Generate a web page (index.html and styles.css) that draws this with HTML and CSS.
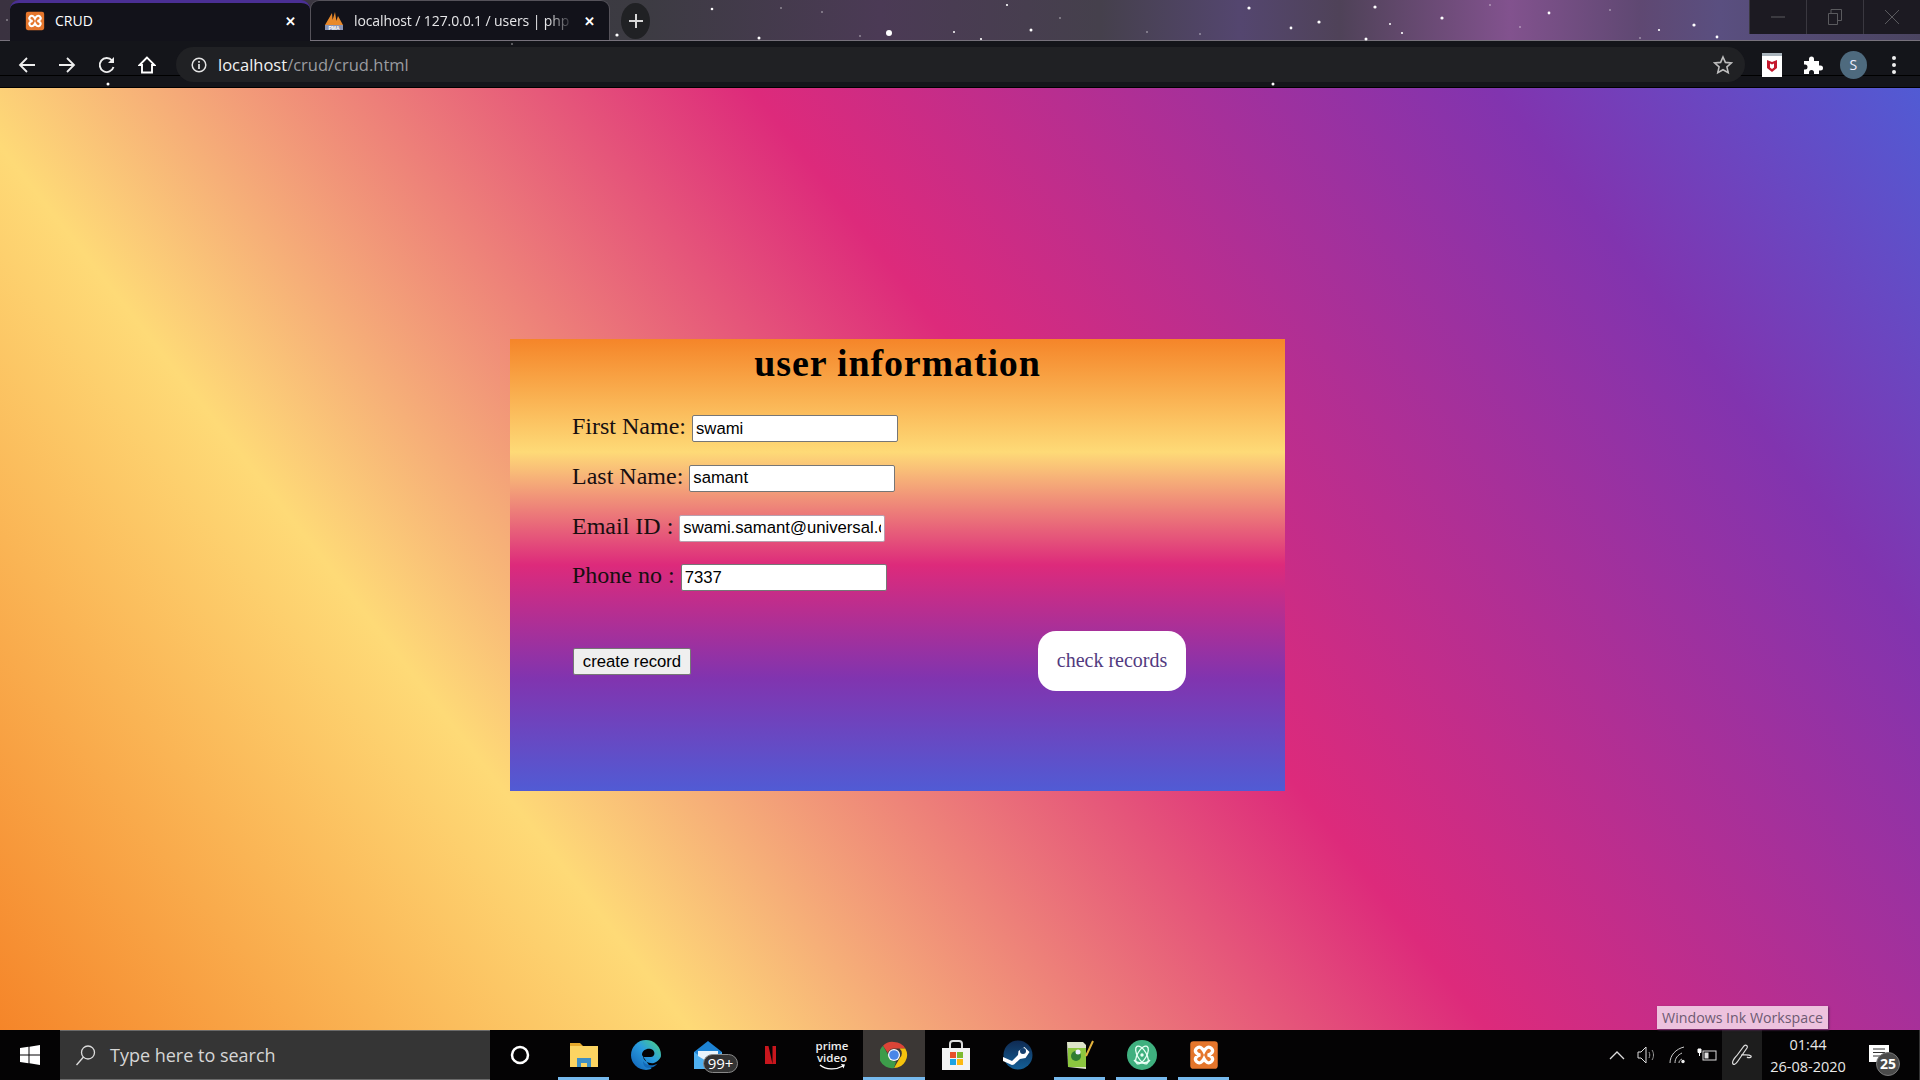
FILE: index.html
```html
<!DOCTYPE html>
<html>
<head>
    <title>CRUD</title>
    <link rel="stylesheet" href="styles.css">
</head>
<body>
    <svg width="0" height="0" class="defs">
        <symbol id="xampp" viewBox="0 0 24 24">
            <rect x="1" y="1" width="22" height="22" rx="2.500" fill="#e5762c"/>
            <path transform="translate(12 12) scale(1.180) translate(-12 -12)" d="M7 7.500c2-2 4 0 5 2 1-2 3-4 5-2s0 4-2.500 4.500c2.500.5 4.500 2.500 2.500 4.500s-4 0-5-2c-1 2-3 4-5 2s0-4 2.500-4.500C7 11.500 5 9.500 7 7.500z" fill="none" stroke="#fff" stroke-width="2.200"/>
        </symbol>
    </svg>

    <header class="browser">
        <svg class="stars" width="1920" height="88">
            <g fill="#fff">
                <circle cx="889" cy="33" r="3"/>
                <circle cx="712" cy="9" r="1.300"/><circle cx="1249" cy="8" r="1.600"/><circle cx="1375" cy="7" r="1.600"/>
                <circle cx="1442" cy="18" r="1.600"/><circle cx="1319" cy="22" r="1.600"/><circle cx="1291" cy="28" r="1.400"/>
                <circle cx="1549" cy="13" r="1.400"/><circle cx="759" cy="38" r="1.500"/><circle cx="617" cy="35" r="1.600"/>
                <circle cx="1031" cy="30" r="1.500"/><circle cx="1366" cy="39" r="1.500"/><circle cx="1402" cy="33" r="1.100"/>
                <circle cx="1390" cy="24" r="1"/><circle cx="981" cy="39" r="1.100"/><circle cx="1007" cy="5" r="1.100"/>
                <circle cx="954" cy="32" r="1"/><circle cx="1694" cy="25" r="1.600"/><circle cx="1659" cy="30" r="1.100"/>
                <circle cx="1717" cy="37" r="1.400"/><circle cx="108" cy="84" r="1.500"/><circle cx="1273" cy="84" r="1.500"/>
            </g>
            <g fill="#fff" opacity=".4">
                <circle cx="781" cy="8" r="1"/><circle cx="822" cy="12" r="1"/><circle cx="860" cy="36" r="1"/>
                <circle cx="1060" cy="18" r="1"/><circle cx="1147" cy="32" r="1"/><circle cx="1200" cy="34" r="1"/>
                <circle cx="1490" cy="5" r="1"/><circle cx="1520" cy="27" r="1"/><circle cx="1610" cy="10" r="1"/>
                <circle cx="1640" cy="38" r="1"/><circle cx="7" cy="20" r="1"/><circle cx="512" cy="44" r="1"/>
            </g>
        </svg>
        <div class="tabstrip">
            <div class="tab active">
                <svg class="favicon" width="20" height="20"><use href="#xampp"/></svg>
                <span class="tab-title">CRUD</span>
                <span class="tab-close">✕</span>
            </div>
            <div class="tab second">
                <svg class="favicon" width="20" height="20" viewBox="0 0 20 20">
                    <path d="M1 14L8 2l1 12zM7 14l4-13 2 13zM11 14L14 5l5 9z" fill="#e8892b"/>
                    <rect x="1" y="14" width="18" height="5" fill="#8a94b4"/>
                    <text x="10" y="18.500" class="pma">PMA</text>
                </svg>
                <span class="tab-title fade">localhost / 127.0.0.1 / users | php</span>
                <span class="tab-close">✕</span>
            </div>
            <div class="newtab">
                <svg width="16" height="16" viewBox="0 0 16 16"><path d="M8 1v14M1 8h14" stroke="#d8d8d8" stroke-width="2"/></svg>
            </div>
            <div class="winbtns">
                <div class="winbtn"><svg width="14" height="14" viewBox="0 0 14 14"><path d="M0 7h14" stroke="#5a5a5e"/></svg></div>
                <div class="winbtn"><svg width="14" height="16" viewBox="0 0 14 16"><path d="M.5 4.500h9v11h-9zM3 4.500v-4h10.500v11h-4" fill="none" stroke="#5a5a5e"/></svg></div>
                <div class="winbtn"><svg width="14" height="16" viewBox="0 0 14 16"><path d="M0 1l14 14M14 1L0 15" stroke="#5a5a5e"/></svg></div>
            </div>
        </div>
        <div class="toolbar">
            <button class="navbtn"><svg width="18" height="18" viewBox="0 0 18 18"><path d="M17 9H2M9 2L2 9l7 7" fill="none" stroke="#eee" stroke-width="1.800"/></svg></button>
            <button class="navbtn"><svg width="18" height="18" viewBox="0 0 18 18"><path d="M1 9h15M9 2l7 7-7 7" fill="none" stroke="#eee" stroke-width="1.800"/></svg></button>
            <button class="navbtn"><svg width="18" height="18" viewBox="0 0 18 18"><path d="M15.500 11a7 7 0 1 1-1.400-6.500" fill="none" stroke="#eee" stroke-width="1.900"/><path d="M16 1v6h-6z" fill="#eee"/></svg></button>
            <button class="navbtn"><svg width="18" height="18" viewBox="0 0 18 18"><path d="M9 1.500L1.500 9H4v7.500h10V9h2.500z" fill="none" stroke="#fff" stroke-width="1.900"/></svg></button>
            <div class="omnibox">
                <svg width="16" height="16" viewBox="0 0 16 16"><circle cx="8" cy="8" r="6.800" fill="none" stroke="#e4e4e4" stroke-width="1.500"/><path d="M8 7v5M8 4v1.700" stroke="#e4e4e4" stroke-width="1.700"/></svg>
                <span class="url"><span class="host">localhost</span>/crud/crud.html</span>
                <svg class="star" width="20" height="20" viewBox="0 0 20 20"><path d="M10 2l2.400 5.400 5.900.6-4.400 3.900 1.300 5.800L10 14.700l-5.200 3 1.300-5.800L1.700 8l5.900-.6z" fill="none" stroke="#bdbdbd" stroke-width="1.600"/></svg>
            </div>
            <div class="ext mcafee">
                <svg width="20" height="24" viewBox="0 0 20 24"><rect width="20" height="24" fill="#fff"/><rect width="20" height="3" fill="#a9b4bc"/><path d="M5 7l5 2 5-2v8l-5 4-5-4z" fill="#c4172c"/><path d="M8 10.500l2 1 2-1v4l-2 1.500-2-1.500z" fill="#fff"/></svg>
            </div>
            <div class="ext">
                <svg width="20" height="20" viewBox="0 0 20 20"><path d="M1 6h5V4a2.500 2.500 0 0 1 5 0v2h5v4.500h1.500a2.500 2.500 0 0 1 0 5H16V19H11v-1.500a2.500 2.500 0 0 0-5 0V19H1v-4.500h1a2.500 2.500 0 0 0 0-5H1z" fill="#fff"/></svg>
            </div>
            <div class="ext"><span class="avatar">S</span></div>
            <div class="ext">
                <svg width="6" height="20" viewBox="0 0 6 20"><circle cx="3" cy="3" r="2" fill="#eee"/><circle cx="3" cy="10" r="2" fill="#eee"/><circle cx="3" cy="17" r="2" fill="#eee"/></svg>
            </div>
        </div>
    </header>

    <main class="page">
        <form class="card">
            <h1>user information</h1>
            <div class="field"><label>First Name:</label><input type="text" value="swami"></div>
            <div class="field"><label>Last Name:</label><input type="text" value="samant"></div>
            <div class="field email"><label>Email ID :</label><input type="text" value="swami.samant@universal.com"></div>
            <div class="field"><label>Phone no :</label><input type="text" value="7337"></div>
            <div class="actions">
                <button type="button" class="create">create record</button>
                <a class="check">check records</a>
            </div>
        </form>
        <div class="ink-tip">Windows Ink Workspace</div>
    </main>

    <footer class="taskbar">
        <div class="startbtn">
            <svg width="20" height="20" viewBox="0 0 20 20"><path d="M0 3l8.500-1.200v7.700H0zM9.500 1.700L20 0v9.500H9.500zM0 10.500h8.500v7.700L0 17zM9.500 10.500H20V20L9.500 18.300z" fill="#fff"/></svg>
        </div>
        <div class="search">
            <svg width="22" height="22" viewBox="0 0 22 22"><circle cx="13" cy="8.500" r="6.500" fill="none" stroke="#ddd" stroke-width="1.300"/><path d="M8.500 13L1.500 21" stroke="#ddd" stroke-width="1.300"/></svg>
            <span>Type here to search</span>
        </div>
        <div class="slot cortana">
            <svg width="22" height="22" viewBox="0 0 22 22"><circle cx="11" cy="11" r="8" fill="none" stroke="#fff" stroke-width="2.500"/></svg>
        </div>
        <div class="slot open">
            <svg width="30" height="28" viewBox="0 0 30 28"><path d="M1 2h10l3 3H1z" fill="#e5a92c"/><rect x="1" y="5" width="28" height="21" fill="#fcd462"/><path d="M8 26v-9h14v9h-4v-4h-6v4z" fill="#3f8fc4"/></svg>
        </div>
        <div class="slot">
            <svg width="32" height="32" viewBox="0 0 32 32">
                <defs><linearGradient id="edge" x1="1" y1="0" x2="0" y2="1"><stop offset="0" stop-color="#4fd67a"/><stop offset=".45" stop-color="#2a9de0"/><stop offset="1" stop-color="#0f5fb5"/></linearGradient></defs>
                <circle cx="16" cy="16" r="15" fill="url(#edge)"/>
                <path d="M12 16c0-5 5-7 9-6 3 1 4 4 3 6-1 2-3 2-4 2h-7c1 4 6 7 11 6 3-1 5-3 7-6v14h-8c-1 0-1 0 0 0z" fill="#040304"/>
                <path d="M13 22c2 4 7 5 11 4 2-.5 3-1 4-2-2 3-6 5-10 5-3 0-5-3-5-7z" fill="#1269b8"/>
            </svg>
        </div>
        <div class="slot mail">
            <svg width="30" height="28" viewBox="0 0 30 28"><path d="M15 0L1 11v17h28V11z" fill="#1d83d4"/><path d="M1 11l14 10 14-10v17H1z" fill="#4fb0f0"/><path d="M5 10h20v5l-10 6-10-6z" fill="#e8f4fc"/></svg>
            <span class="badge">99+</span>
        </div>
        <div class="slot">
            <svg width="11" height="18" viewBox="0 0 11 18"><path d="M0 0h3.500L7.500 18H3.500zM7.500 0H11v18H7.500zM0 0h3.500v18H0z" fill="#c9161d"/></svg>
        </div>
        <div class="slot prime">
            <span class="prime-word">prime</span>
            <span class="prime-word">video</span>
            <svg width="26" height="7" viewBox="0 0 26 7"><path d="M1 1c6 5 16 5 23 1" fill="none" stroke="#fff" stroke-width="1.300"/><path d="M22 0l4 .5-1.500 4z" fill="#fff"/></svg>
        </div>
        <div class="slot open active">
            <svg width="28" height="28" viewBox="0 0 28 28">
                <path d="M14 1a13 13 0 0 1 11.300 6.500H14a6.500 6.500 0 0 0-6.200 4.500L3 4.700A13 13 0 0 1 14 1z" fill="#db4437"/>
                <path d="M25.300 7.500A13 13 0 0 1 14 27l5.600-9.700A6.500 6.500 0 0 0 19.600 7.500z" fill="#f4c20d"/>
                <path d="M14 27A13 13 0 0 1 3 4.700l5.600 9.800a6.500 6.500 0 0 0 7.500 5.900z" fill="#3d9c4a"/>
                <circle cx="14" cy="14" r="6" fill="#fff"/><circle cx="14" cy="14" r="4.800" fill="#4a86e8"/>
            </svg>
        </div>
        <div class="slot">
            <svg width="30" height="32" viewBox="0 0 30 32"><path d="M9 10V5a3 3 0 0 1 3-3h6a3 3 0 0 1 3 3v5" fill="none" stroke="#ddd" stroke-width="2"/><path d="M1 9h28v22H1z" fill="#f3f3f3"/><rect x="9" y="13" width="6" height="6" fill="#e8502a"/><rect x="16" y="13" width="6" height="6" fill="#7db92f"/><rect x="9" y="20" width="6" height="6" fill="#1ba3e4"/><rect x="16" y="20" width="6" height="6" fill="#fcb911"/></svg>
        </div>
        <div class="slot">
            <svg width="30" height="30" viewBox="0 0 30 30">
                <defs><linearGradient id="steam" x1="0" y1="0" x2="0" y2="1"><stop offset="0" stop-color="#0f2a52"/><stop offset="1" stop-color="#145f96"/></linearGradient></defs>
                <circle cx="15" cy="15" r="14.500" fill="url(#steam)"/>
                <path d="M0 17l9 4 6-6 .5-4 6-4 5 5-4 6-5.500 1-6 5.500-2 .5-9-4z" fill="#fff"/>
                <circle cx="20" cy="11" r="3" fill="#16406f"/>
            </svg>
        </div>
        <div class="slot open">
            <svg width="28" height="30" viewBox="0 0 28 30"><path d="M1 2h16l3 3v24L2 27z" fill="#dde3c8"/><path d="M2 8h18v19H2z" fill="#8cc63f"/><circle cx="10" cy="16" r="5" fill="#2f7d32"/><circle cx="12" cy="12" r="2.500" fill="#eef"/><path d="M20 16L27 1" stroke="#e3b23c" stroke-width="2"/></svg>
        </div>
        <div class="slot open">
            <svg width="30" height="30" viewBox="0 0 30 30"><circle cx="15" cy="15" r="15" fill="#3fb07f"/><g fill="none" stroke="#e8fff4" stroke-width="1.300"><ellipse cx="15" cy="15" rx="10" ry="4.500" transform="rotate(60 15 15)"/><ellipse cx="15" cy="15" rx="10" ry="4.500" transform="rotate(120 15 15)"/><path d="M7 20c3 4 13 4 16 0"/></g><circle cx="15" cy="15" r="1.700" fill="#e8fff4"/></svg>
        </div>
        <div class="slot open">
            <svg width="30" height="30"><use href="#xampp"/></svg>
        </div>
        <div class="tray">
            <svg class="tray-icon" width="16" height="10" viewBox="0 0 16 10"><path d="M1 9l7-7 7 7" fill="none" stroke="#ddd" stroke-width="1.300"/></svg>
            <svg class="tray-icon" width="20" height="20" viewBox="0 0 20 20"><path d="M1 7h3l5-5v16l-5-5H1z" fill="none" stroke="#ddd"/><path d="M12 7c1 2 1 4 0 6M15 5c2 3 2 7 0 10" fill="none" stroke="#999"/></svg>
            <svg class="tray-icon wifi" width="18" height="18" viewBox="0 0 18 18"><path d="M1 17C1 9 7 3 15 1M6 17c0-5 3-8 7-10" fill="none" stroke="#ccc"/><path d="M10 17c0-2 1-3 3-4" fill="none" stroke="#ccc"/><circle cx="14" cy="15.500" r="1.700" fill="#eee"/></svg>
            <svg class="tray-icon battery" width="20" height="14" viewBox="0 0 20 14"><rect x="6" y="3" width="13" height="9" fill="none" stroke="#ddd"/><rect x="7.500" y="4.500" width="4" height="6" fill="#ddd"/><path d="M1 1h3v3.500H1zM2.500 4.500V8" fill="#fff" stroke="#fff"/></svg>
            <div class="ink">
                <svg width="22" height="24" viewBox="0 0 22 24"><path d="M2 21c-2-3 2-6 5-10l6-8c2-2 4 0 3 2l-7 10c-2 3-5 8-7 6zM10 12c3 0 8-1 10 1 1 2-3 2-4 1" fill="none" stroke="#ddd" stroke-width="1.200"/></svg>
            </div>
            <div class="clock"><span>01:44</span><span>26-08-2020</span></div>
            <div class="notif">
                <svg width="20" height="17" viewBox="0 0 20 17"><path d="M0 0h20v17H0z" fill="#fff"/><path d="M4 4h12M4 7.500h12M4 11h8" stroke="#333"/></svg>
                <span class="notif-count">25</span>
            </div>
        </div>
    </footer>
</body>
</html>
```

FILE: styles.css
```css
* {
    box-sizing: border-box;
}

body {
    margin: 0;
    height: 100vh;
    display: flex;
    flex-direction: column;
    overflow: hidden;
    font-family: "Open Sans", "Noto Sans", sans-serif;
}

.defs {
    position: absolute;
}

/* browser chrome */
.browser {
    position: relative;
    height: 88px;
    flex: none;
    background: linear-gradient(90deg, #3a3240 0, #3c3b42 640px, #4b3a55 880px, #45404c 1100px, #54466f 1240px, #4f4258 1340px, #82528e 1510px, #5f4872 1640px, #5a4f80 1720px, #4a4460 100%);
}

.stars {
    position: absolute;
    top: 0;
    left: 0;
    z-index: 2;
    pointer-events: none;
}

.tabstrip {
    height: 41px;
    display: flex;
    padding-left: 10px;
    border-bottom: 1px solid #77727c;
}

.tab {
    width: 300px;
    height: 41px;
    display: flex;
    align-items: center;
    gap: 10px;
    padding: 0 14px 0 15px;
    border-radius: 9px 9px 0 0;
    background: #12121a;
    color: #e6e6e8;
    font-size: 14px;
    position: relative;
    border: 1px solid #55525a;
    border-bottom: 0;
}

.tab.active {
    border: 0;
    border-top: 3px solid #4a2f94;
    padding-bottom: 3px;
    color: #fff;
}

.tab.second {
    height: 40px;
    padding-left: 13px;
}

.tab-title {
    flex: 1;
    white-space: nowrap;
    overflow: hidden;
}

.tab-title.fade {
    -webkit-mask-image: linear-gradient(90deg, #000 88%, transparent 100%);
    mask-image: linear-gradient(90deg, #000 88%, transparent 100%);
    letter-spacing: -.1px;
}

.tab-close {
    font-size: 13px;
    font-weight: bold;
    color: #fff;
}

.pma {
    font: bold 5px "Liberation Sans", sans-serif;
    fill: #fff;
    text-anchor: middle;
}

.newtab {
    width: 29px;
    height: 36px;
    margin: 3px 0 0 11px;
    border-radius: 50%;
    background: #202124;
    display: flex;
    align-items: center;
    justify-content: center;
}

.winbtns {
    display: flex;
    margin-left: auto;
    height: 35px;
    margin-top: -1px;
    background: #1c1a22;
}

.winbtn {
    width: 57px;
    display: flex;
    align-items: center;
    justify-content: center;
    border-left: 1px solid #3a3840;
}

.toolbar {
    height: 47px;
    display: flex;
    align-items: center;
    padding: 0 0 0 7px;
    background: linear-gradient(#14151a, #14151a 34px, #000 34px, #000 35px, #14151a 35px, #14151a 46px, #000 46px);
}

.navbtn {
    width: 40px;
    height: 34px;
    padding: 0;
    border: 0;
    background: none;
    display: flex;
    align-items: center;
    justify-content: center;
}

.omnibox {
    width: 1569px;
    height: 35px;
    margin-left: 9px;
    padding: 0 12px 0 15px;
    border-radius: 18px;
    background: #202124;
    display: flex;
    align-items: center;
    gap: 11px;
    font-size: 16.500px;
    color: #9a9ca0;
}

.url {
    flex: 1;
}

.host {
    color: #f2f2f2;
}

.ext {
    width: 40.500px;
    height: 34px;
    display: flex;
    align-items: center;
    justify-content: center;
}

.mcafee {
    margin-left: 7px;
}

.avatar {
    width: 27px;
    height: 28px;
    border-radius: 50%;
    background: #4e6a7e;
    color: #eef;
    font-size: 14px;
    display: flex;
    align-items: center;
    justify-content: center;
}

/* the page itself */
.page {
    flex: 1;
    position: relative;
    background: linear-gradient(52deg, #f58529, #feda77 26%, #dd2a7b 56%, #8134af 84%, #515bd4);
    padding: 251px 0 0 510px;
}

.card {
    width: 775px;
    height: 452px;
    background: linear-gradient(#f58529, #feda77, #dd2a7b, #8134af, #515bd4);
    padding: 0 99px 0 62px;
    font-family: "Liberation Serif", serif;
}

h1 {
    margin: 0 0 0 -62px;
    width: 775px;
    padding-top: 2px;
    height: 76px;
    text-align: center;
    font-size: 38px;
    line-height: 44px;
    letter-spacing: .85px;
    color: #000;
}

.field {
    height: 49.800px;
    display: flex;
    align-items: flex-start;
    gap: 6px;
    font-size: 24px;
    line-height: 27px;
    color: #170f10;
}

.field label {
    margin-top: -2px;
}

input {
    width: 206px;
    height: 27px;
    padding: 1px 3px;
    border: 1px solid #767676;
    border-radius: 2px;
    background: #fff;
    font: 16.700px "Liberation Sans", sans-serif;
    color: #000;
}

.email input {
    border-color: #b8a0b0;
}

.actions {
    margin-top: 16.800px;
    height: 60px;
    display: flex;
    align-items: center;
    justify-content: space-between;
}

.create {
    width: 118px;
    height: 27px;
    margin: 2px 0 0 1px;
    padding: 0;
    border: 1px solid #767676;
    border-radius: 2px;
    background: #efefef;
    font: 16.700px "Liberation Sans", sans-serif;
    color: #000;
}

.check {
    width: 148px;
    height: 60px;
    border-radius: 18px;
    background: #fff;
    color: #523a80;
    font-size: 20px;
    display: flex;
    align-items: center;
    justify-content: center;
}

.ink-tip {
    position: absolute;
    left: 1657px;
    bottom: 1px;
    width: 171px;
    height: 23px;
    background: #edc2de;
    box-shadow: 1px 1px 2px #5a2a5c;
    color: #6d5a72;
    font-size: 14.200px;
    line-height: 23px;
    text-align: center;
    white-space: nowrap;
}

/* windows taskbar */
.taskbar {
    height: 50px;
    flex: none;
    display: flex;
    background: #040304;
    color: #fff;
}

.startbtn {
    width: 60px;
    display: flex;
    align-items: center;
    justify-content: center;
}

.search {
    width: 430px;
    display: flex;
    align-items: center;
    gap: 13px;
    padding-left: 15px;
    background: #353535;
    border-top: 1px solid #6a6a6a;
    border-bottom: 1px solid #6a6a6a;
    color: #d6d6d6;
    font-size: 18px;
}

.slot {
    width: 62px;
    position: relative;
    display: flex;
    flex-direction: column;
    align-items: center;
    justify-content: center;
}

.slot.cortana {
    width: 63px;
    padding-right: 3px;
}

.slot.open::after {
    content: "";
    position: absolute;
    left: 5px;
    right: 6px;
    bottom: 0;
    height: 3px;
    background: #76b9ed;
}

.slot.active {
    background: #3b3735;
}

.slot.active::after {
    left: 0;
    right: 0;
}

.badge {
    position: absolute;
    left: 26px;
    bottom: 7px;
    width: 35px;
    height: 19px;
    border: 1px solid #888;
    border-radius: 10px;
    background: #333;
    font-size: 15px;
    line-height: 17px;
    text-align: center;
    color: #fff;
}

.prime-word {
    font: 600 11.500px/12px "Open Sans", sans-serif;
    color: #eee;
}

.tray {
    margin-left: auto;
    display: flex;
    align-items: center;
    padding-right: 5px;
    border-right: 1px solid #333;
    font-size: 14.500px;
}

.tray-icon {
    margin-right: 12px;
}

.tray-icon.wifi {
    margin-right: 10px;
}

.tray-icon.battery {
    margin-right: 7px;
}

.ink {
    width: 40px;
    height: 50px;
    margin-left: -2px;
    background: #1d1d1d;
    display: flex;
    align-items: center;
    justify-content: center;
}

.clock {
    width: 92px;
    display: flex;
    flex-direction: column;
    align-items: center;
    gap: 3px;
    line-height: 19px;
    color: #e8e8e8;
}

.notif {
    width: 60px;
    height: 50px;
    position: relative;
    display: flex;
    align-items: center;
    padding: 0 0 3px 15px;
}

.notif-count {
    position: absolute;
    left: 22px;
    top: 22px;
    width: 24px;
    height: 24px;
    border-radius: 50%;
    background: #4a4a4a;
    border: 1px solid #777;
    font-size: 14px;
    font-weight: bold;
    line-height: 22px;
    text-align: center;
}
```
